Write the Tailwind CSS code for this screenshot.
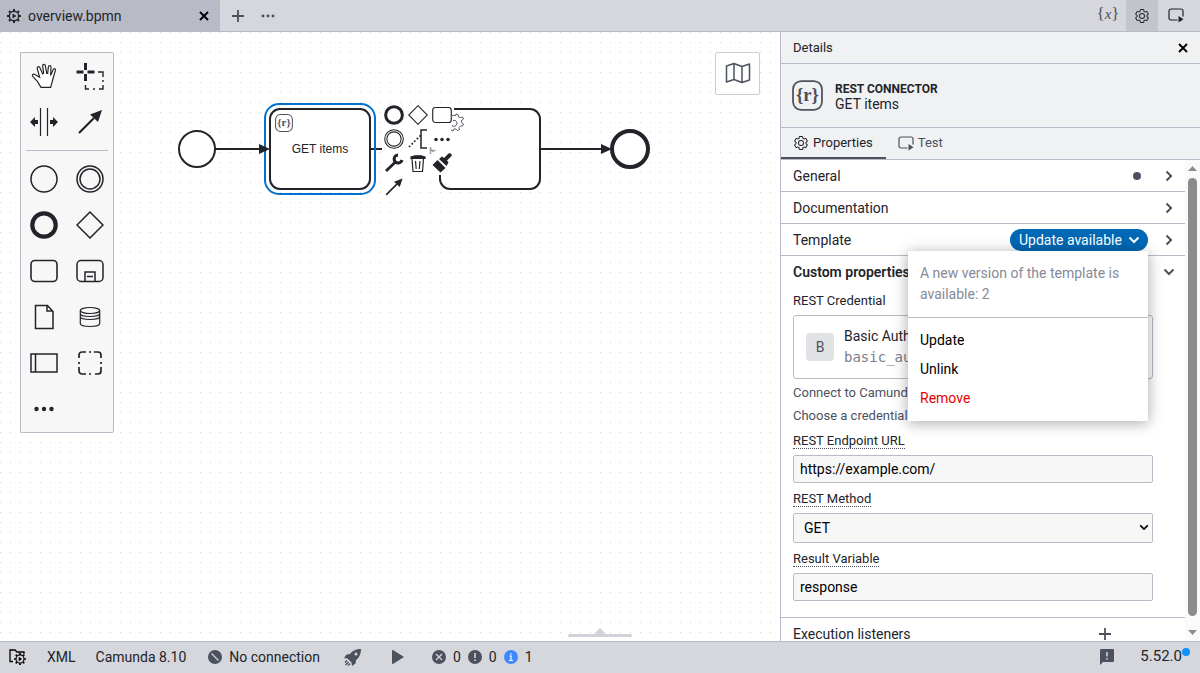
<!DOCTYPE html>
<html lang="en">
<head>
<meta charset="utf-8">
<title>overview.bpmn</title>
<script src="https://cdn.jsdelivr.net/npm/@tailwindcss/browser@4"></script>
</head>
<body class="flex h-screen flex-col overflow-hidden bg-white font-[Roboto,'Open_Sans',sans-serif] text-sm text-[#22242a]">

<svg class="hidden" aria-hidden="true">
  <symbol id="gear" viewBox="0 0 32 32"><path fill="currentColor" fill-rule="evenodd" d="M27,16.76c0-.25,0-.5,0-.76s0-.51,0-.77l1.92-1.68A2,2,0,0,0,29.3,11L26.94,7a2,2,0,0,0-1.73-1,2,2,0,0,0-.64.1l-2.43.82a11.35,11.35,0,0,0-1.31-.75l-.51-2.52a2,2,0,0,0-2-1.61H13.64a2,2,0,0,0-2,1.61l-.51,2.52a11.48,11.48,0,0,0-1.32.75L7.43,6.06A2,2,0,0,0,6.79,6,2,2,0,0,0,5.06,7L2.7,11a2,2,0,0,0,.41,2.51L5,15.24c0,.25,0,.5,0,.76s0,.51,0,.77L3.11,18.45A2,2,0,0,0,2.7,21L5.06,25a2,2,0,0,0,1.73,1,2,2,0,0,0,.64-.1l2.43-.82a11.35,11.35,0,0,0,1.31.75l.51,2.52a2,2,0,0,0,2,1.61h4.72a2,2,0,0,0,2-1.61l.51-2.52a11.48,11.48,0,0,0,1.32-.75l2.42.82a2,2,0,0,0,.64.1,2,2,0,0,0,1.73-1L29.3,21a2,2,0,0,0-.41-2.51ZM25.21,24l-3.43-1.16a8.86,8.86,0,0,1-2.71,1.57L18.36,28H13.64l-.71-3.55a9.36,9.36,0,0,1-2.7-1.57L6.79,24,4.43,20l2.72-2.4a8.9,8.9,0,0,1,0-3.13L4.43,12,6.79,8l3.43,1.16a8.86,8.86,0,0,1,2.71-1.57L13.64,4h4.72l.71,3.55a9.36,9.36,0,0,1,2.7,1.57L25.21,8,27.57,12l-2.72,2.4a8.9,8.9,0,0,1,0,3.13L27.57,20Z M16,22a6,6,0,1,1,6-6A5.94,5.94,0,0,1,16,22Zm0-10a3.91,3.91,0,0,0-4,4,3.91,3.91,0,0,0,4,4,3.91,3.91,0,0,0,4-4A3.91,3.91,0,0,0,16,12Z"/></symbol>
  <symbol id="engine" viewBox="0 0 14 14">
    <circle cx="7" cy="7" r="4.700" fill="none" stroke="currentColor" stroke-width="1.400"/>
    <path stroke="currentColor" stroke-width="2" d="M7 0v2M7 12v2M0 7h2M12 7h2M2 2l1.500 1.500M10.500 10.500 12 12M12 2l-1.500 1.500M3.500 10.500 2 12"/>
    <path fill="currentColor" d="M5.500 4.500v5L9.500 7z"/>
  </symbol>
  <symbol id="play-box" viewBox="0 0 16 15">
    <path fill="none" stroke="currentColor" stroke-width="1.200" d="M9.500 12H3a2 2 0 0 1-2-2V3a2 2 0 0 1 2-2h10a2 2 0 0 1 2 2v5.500"/>
    <path fill="currentColor" d="M10.500 8v6.500L15.500 11.200z"/>
  </symbol>
  <symbol id="cross" viewBox="0 0 10 10"><path stroke="currentColor" stroke-width="1.900" d="M1 1l8 8M9 1L1 9"/></symbol>
  <symbol id="plus" viewBox="0 0 12 12"><path stroke="currentColor" stroke-width="1.800" d="M6 0v12M0 6h12"/></symbol>
  <symbol id="dots" viewBox="0 0 20 6"><g fill="currentColor"><circle cx="2.500" cy="3" r="2.200"/><circle cx="10" cy="3" r="2.200"/><circle cx="17.500" cy="3" r="2.200"/></g></symbol>
  <symbol id="chevron" viewBox="0 0 8 12"><path fill="none" stroke="currentColor" stroke-width="2" d="M1.500 1.500L6 6l-4.500 4.500"/></symbol>
  <symbol id="chevron-down" viewBox="0 0 12 8"><path fill="none" stroke="currentColor" stroke-width="2" d="M1.500 1.500L6 6l4.500-4.500"/></symbol>
  <symbol id="connector" viewBox="0 0 30 30">
    <rect x="1" y="1" width="28" height="28" rx="8" fill="none" stroke="currentColor" stroke-width="1.700"/>
    <text x="15" y="20" text-anchor="middle" font-family="Liberation Serif, serif" font-weight="bold" font-size="18" fill="currentColor">{r}</text>
  </symbol>
  <symbol id="ring" viewBox="0 0 28 28"><circle cx="14" cy="14" r="13" fill="none" stroke="currentColor" stroke-width="1.500"/></symbol>
  <symbol id="ring-double" viewBox="0 0 28 28"><g fill="none" stroke="currentColor" stroke-width="1.500"><circle cx="14" cy="14" r="13"/><circle cx="14" cy="14" r="10"/></g></symbol>
  <symbol id="ring-thick" viewBox="0 0 28 28"><circle cx="14" cy="14" r="11.700" fill="none" stroke="currentColor" stroke-width="4.200"/></symbol>
  <symbol id="diamond" viewBox="0 0 28 28"><path fill="none" stroke="currentColor" stroke-width="1.500" d="M14 1l13 13-13 13L1 14z"/></symbol>
  <symbol id="task" viewBox="0 0 28 28"><rect x="1" y="3.500" width="26" height="21" rx="4" fill="none" stroke="currentColor" stroke-width="1.600"/></symbol>
  <symbol id="arrow" viewBox="0 0 28 28"><path stroke="currentColor" stroke-width="2.200" d="M3 25L18 10"/><path fill="currentColor" d="M26 2l-4 12-8-7.500z"/></symbol>
</svg>

<header class="flex h-8 shrink-0 border-b border-[#b8bac8] bg-[#d5d7dd]">
  <div class="flex w-[220px] items-center bg-[#b8bac6] pt-px pr-[11px] pl-[7px]">
    <svg class="mr-[7px] size-[14px]"><use href="#engine"/></svg>
    <span class="flex-1">overview.bpmn</span>
    <button aria-label="Close tab" class="text-black"><svg class="size-[10px]"><use href="#cross"/></svg></button>
  </div>
  <button aria-label="New tab" class="ml-3 text-[#4c515e]"><svg class="size-3"><use href="#plus"/></svg></button>
  <button aria-label="Tabs menu" class="ml-[17px] text-[#4c515e]"><svg class="h-[4px] w-[14px]"><use href="#dots"/></svg></button>
  <div class="ml-auto flex pr-[6px]">
    <button aria-label="Variables" class="w-9 pb-[3px] text-center font-['Liberation_Serif',serif] text-[17px] leading-7 text-[#4c515e]">{<i class="text-[15px]">x</i>}</button>
    <button aria-label="Properties panel" class="grid w-8 place-items-center bg-[#c4c5ca]"><svg class="size-4"><use href="#gear"/></svg></button>
    <button aria-label="Play" class="grid w-9 place-items-center"><svg class="h-[15px] w-4"><use href="#play-box"/></svg></button>
  </div>
</header>

<main class="flex min-h-0 flex-1">
  <section aria-label="Diagram" class="relative min-w-0 flex-1">
    <svg class="block h-full w-full">
      <defs><pattern id="grid" width="10" height="10" patternUnits="userSpaceOnUse"><rect width="1" height="1" fill="#d3d3d6"/></pattern></defs>
      <rect width="100%" height="100%" fill="url(#grid)"/>
      <g fill="#fff" stroke="#22242a" stroke-width="2">
        <path d="M215 117h47M370 117h70M540 117h68"/>
        <path fill="#22242a" stroke="none" d="M601 112v10l11-5z"/>
        <circle cx="197" cy="117" r="18"/>
        <circle cx="630" cy="117" r="18" stroke-width="4"/>
        <rect x="270" y="77" width="100" height="80" rx="10"/>
        <rect x="440" y="77" width="100" height="80" rx="10"/>
      </g>
      <rect x="265" y="72" width="110" height="90" rx="14" fill="none" stroke="#0072ce" stroke-width="2"/>
      <path fill="#22242a" d="M259 112v10l11-5z"/>
      <use href="#connector" x="275" y="82" width="18" height="18" color="#4c515e"/>
      <text x="320" y="121" text-anchor="middle" class="fill-[#22242a] font-['Liberation_Sans',sans-serif] text-xs">GET items</text>
    </svg>

    <nav aria-label="Palette" class="absolute top-5 left-5 grid w-[94px] grid-cols-2 rounded-[2px] border border-[#b8bac8] bg-[#f7f7f8]">
      <button aria-label="Hand tool" class="grid h-[46px] place-items-center"><svg class="size-7" viewBox="90 186 84 84" fill="#fff" stroke="currentColor" stroke-width="3.500"><path d="M123 262L152 262L158 240L166 212C168 205 161 204 159 210L154 222L152 224L153 202C153 195 146 195 145 202L143 220L140 220L136 197C135 191 127 192 128 199L131 220L128 222L120 204C117 197 110 200 112 207L119 232L106 224C100 220 94 225 99 230L112 244Z"/></svg></button>
      <button aria-label="Lasso tool" class="grid h-[46px] place-items-center"><svg class="size-7" viewBox="0 0 28 28" stroke="currentColor" fill="none"><path stroke-width="3" d="M0.500 10h7M11.500 10h7M9.500 1v7M9.500 12v7"/><path stroke-width="1.400" d="M22 10h5v5M27 18v2M27 23v4h-4M19 27h-2M13 27H9.500v-4"/></svg></button>
      <button aria-label="Space tool" class="grid h-[46px] place-items-center"><svg class="size-7" viewBox="0 0 28 28"><path stroke="currentColor" stroke-width="1.200" d="M10.500 0v28M17.500 0v28"/><path fill="currentColor" d="M0 14l5-5v3h3v4H5v3zM28 14l-5-5v3h-3v4h3v3z"/></svg></button>
      <button aria-label="Connect tool" class="grid h-[46px] place-items-center"><svg class="size-7"><use href="#arrow"/></svg></button>
      <hr class="col-span-2 mx-[5px] my-[5px] border-[#b8bac8]">
      <button aria-label="Start event" class="grid h-[46px] place-items-center"><svg class="size-7"><use href="#ring"/></svg></button>
      <button aria-label="Intermediate event" class="grid h-[46px] place-items-center"><svg class="size-7"><use href="#ring-double"/></svg></button>
      <button aria-label="End event" class="grid h-[46px] place-items-center"><svg class="size-7"><use href="#ring-thick"/></svg></button>
      <button aria-label="Gateway" class="grid h-[46px] place-items-center"><svg class="size-7"><use href="#diamond"/></svg></button>
      <button aria-label="Task" class="grid h-[46px] place-items-center"><svg class="size-7"><use href="#task"/></svg></button>
      <button aria-label="Sub-process" class="grid h-[46px] place-items-center"><svg class="size-7" viewBox="0 0 28 28" fill="none" stroke="currentColor" stroke-width="1.500"><rect x="1" y="3.500" width="26" height="21" rx="4"/><path d="M9 24.500v-9.500h10v9.500M11 19.500h6"/></svg></button>
      <button aria-label="Data object" class="grid h-[46px] place-items-center"><svg class="size-7" viewBox="0 0 28 28" fill="none" stroke="currentColor" stroke-width="1.500"><path d="M5.500 2.500h12l5.500 6v17H5.500zM17 2.500V8h6"/></svg></button>
      <button aria-label="Data store" class="grid h-[46px] place-items-center"><svg class="size-7" viewBox="0 0 28 28" fill="none" stroke="currentColor" stroke-width="1.200"><ellipse cx="14" cy="7.500" rx="9.700" ry="3"/><path d="M4.300 7.500v13c0 4 19.400 4 19.400 0v-13M4.300 10.500c0 4 19.400 4 19.400 0M4.300 13.500c0 4 19.400 4 19.400 0"/></svg></button>
      <button aria-label="Participant" class="grid h-[46px] place-items-center"><svg class="size-7" viewBox="0 0 28 28" fill="none" stroke="currentColor" stroke-width="1.500"><path d="M1 5h26v18H1zM5.500 5v18"/></svg></button>
      <button aria-label="Group" class="grid h-[46px] place-items-center"><svg class="size-7" viewBox="0 0 28 28" fill="none" stroke="currentColor" stroke-width="1.700"><path d="M3 9V6a3 3 0 0 1 3-3h4M18 3h4a3 3 0 0 1 3 3v3M25 18v4a3 3 0 0 1-3 3h-3M10 25H6a3 3 0 0 1-3-3v-4M13 3h2M13 25h2M3 13v2M25 13v2"/></svg></button>
      <button aria-label="More elements" class="grid h-[46px] place-items-center"><svg class="h-[6px] w-5"><use href="#dots"/></svg></button>
    </nav>

    <!-- Context pad beside the selected task -->
    <div class="absolute top-[71px] left-[382px]">
      <div class="grid grid-cols-3 bg-white">
        <button aria-label="Append end event" class="grid size-6 place-items-center"><svg class="size-5"><use href="#ring-thick"/></svg></button>
        <button aria-label="Append gateway" class="grid size-6 place-items-center"><svg class="size-5"><use href="#diamond"/></svg></button>
        <button aria-label="Append task" class="grid size-6 place-items-center"><svg class="size-5"><use href="#task"/></svg></button>
        <button aria-label="Append intermediate event" class="grid size-6 place-items-center"><svg class="size-5"><use href="#ring-double"/></svg></button>
        <button aria-label="Add text annotation" class="grid size-6 place-items-center"><svg class="size-5" viewBox="0 0 20 20" fill="none" stroke="currentColor"><path stroke-width="1.500" d="M19 1h-6v18h6"/><path stroke-width="1.700" stroke-dasharray="1.700 2" d="M1 18L13 6"/></svg></button>
        <button aria-label="Append element" class="grid size-6 place-items-center"><svg class="h-[5px] w-4"><use href="#dots"/></svg></button>
        <button aria-label="Change element" class="grid size-6 place-items-center"><svg class="size-5" viewBox="0 0 20 20"><path stroke="currentColor" stroke-width="2.800" d="M2 18L12 8.500"/><path fill="none" stroke="currentColor" stroke-width="3" d="M14 2a4 4 0 1 0 4 5"/></svg></button>
        <button aria-label="Delete" class="grid size-6 place-items-center"><svg class="size-5" viewBox="0 0 20 20" fill="none" stroke="currentColor" stroke-width="1.200"><path d="M4 6l1 12.500h9.500L15.500 6M7.500 8l.7 8M12 8l-.7 8"/><path fill="currentColor" d="M3 5.500V4l4-1.200h6L17 4v1.500z"/></svg></button>
        <button aria-label="Set colour" class="grid size-6 place-items-center"><svg class="size-5" viewBox="0 0 20 20" fill="currentColor"><path d="M5.500 7l8 8-5 4.500-8-7.500zM7 6l3-2.500L12 5l4.500-4.500c2-1 4 1 3 2.500L15 7.500l1.500 2-2 3.500z"/></svg></button>
      </div>
      <button aria-label="Connect" class="grid size-6 place-items-center bg-white"><svg class="size-5"><use href="#arrow"/></svg></button>
      <svg class="absolute top-[10px] left-[63px] size-5" viewBox="0 0 20 20" fill="none" stroke="#555862"><path d="M6 4l2-2 2 1 1-2 2 .5.500 2.500 2 .5 2-.500 1 2-2 1.500v2l2 1.500-1 2h-2l-1.500 1.500.5 2-2 1-1.500-1.500h-2L8 18l-2-1"/><path d="M8 7.500a3 3 0 1 1-1 5"/></svg>
      <svg class="absolute top-[42px] left-[43px] size-[11px]" viewBox="0 0 11 11" stroke="#a0a2a9" fill="none"><path stroke-width="1.500" d="M5.500 2v7M5.500 5.500h5M5.500 4l3 3"/></svg>
    </div>

    <button aria-label="Toggle minimap" class="absolute top-5 right-5 grid h-[43px] w-[45px] place-items-center rounded-[2px] border border-[#ccc] bg-white pb-[2px] text-[#4c515e]"><svg class="h-[22px] w-[26px]" viewBox="0 0 26 22" fill="none" stroke="currentColor" stroke-width="1.500" stroke-linejoin="round"><path d="M1.500 4L9 1.500l8 3L24.500 2v16L17 20.500l-8-3-7.500 2.500zM9 1.500v16M17 4.500v16"/></svg></button>
    <button aria-label="Resize bottom panel" class="absolute bottom-1 left-[568px] flex w-16 flex-col items-center"><svg class="h-[6px] w-3" viewBox="0 0 12 6"><path fill="#d2d3da" d="M0 6l6-6 6 6z"/></svg><span class="h-[3px] w-full rounded-full bg-[#d2d3da]"></span></button>
  </section>

  <aside aria-label="Details" class="flex w-[420px] flex-col border-l border-[#b8bac8]">
    <div class="flex h-8 shrink-0 items-center justify-between border-b border-[#b8bac8] bg-[#f0f1f3] px-3">
      <h2 class="pt-px text-[13px]">Details</h2>
      <button aria-label="Close panel" class="text-black"><svg class="size-[10px]"><use href="#cross"/></svg></button>
    </div>
    <div class="flex h-16 shrink-0 items-center gap-3 border-b border-[#b8bac8] bg-[#f0f1f3] px-[11px]">
      <svg class="size-[31px] text-[#4c515e]"><use href="#connector"/></svg>
      <div class="leading-[14px]"><div class="text-xs font-bold">REST CONNECTOR</div><div>GET items</div></div>
    </div>
    <div role="tablist" class="flex h-8 shrink-0 border-b border-[#b8bac8] bg-[#f0f1f3] text-[13px]">
      <button role="tab" aria-selected="true" class="flex items-center gap-1 border-b-2 border-[#4c515e] pt-px pr-[13px] pl-3"><svg class="size-4"><use href="#gear"/></svg>Properties</button>
      <button role="tab" aria-selected="false" class="flex items-center gap-1 px-3 text-[#4c515e]"><svg class="h-[15px] w-4"><use href="#play-box"/></svg>Test</button>
    </div>

    <div class="flex min-h-0 flex-1">
      <div class="min-w-0 flex-1 overflow-hidden">
        <div class="flex h-8 items-center border-b border-[#b8bac8] px-3"><h3 class="flex-1">General</h3><span class="mr-6 size-2 rounded-full bg-[#4c515e]"></span><button aria-label="Open General" class="text-[#4c515e]"><svg class="h-3 w-2"><use href="#chevron"/></svg></button></div>
        <div class="flex h-8 items-center border-b border-[#b8bac8] px-3"><h3 class="flex-1">Documentation</h3><button aria-label="Open Documentation" class="text-[#4c515e]"><svg class="h-3 w-2"><use href="#chevron"/></svg></button></div>
        <div class="flex h-8 items-center border-b border-[#b8bac8] px-3">
          <h3 class="flex-1">Template</h3>
          <div class="relative mr-[17px]">
            <button aria-expanded="true" class="flex h-[22px] w-[138px] items-center justify-between rounded-full bg-[#0068b5] pr-2 pl-[9px] text-white">Update available<svg class="h-2 w-3"><use href="#chevron-down"/></svg></button>
            <div class="absolute top-full right-0 z-10 w-60 bg-white shadow-[0_2px_14px_rgba(0,0,0,0.35)]">
              <p class="border-b border-[#b8bac8] px-3 py-3 leading-[21px] text-[#868998]">A new version of the template is available: 2</p>
              <div class="flex flex-col py-2 text-black">
                <button class="h-[29px] px-3 text-left">Update</button>
                <button class="h-[29px] px-3 text-left">Unlink</button>
                <button class="h-[29px] px-3 text-left text-[#e60000]">Remove</button>
              </div>
            </div>
          </div>
          <button aria-label="Open Template" class="text-[#4c515e]"><svg class="h-3 w-2"><use href="#chevron"/></svg></button>
        </div>
        <div class="border-b border-[#b8bac8] pb-4">
          <div class="flex h-8 items-center pr-[10px] pl-3"><h3 class="flex-1 font-semibold">Custom properties</h3><button aria-label="Close Custom properties" class="text-[#4c515e]"><svg class="h-2 w-3"><use href="#chevron-down"/></svg></button></div>
          <div class="pr-8 pl-3 text-[13px] leading-5">
            <div class="mt-[3px] mb-1">REST Credential</div>
            <div class="flex h-16 items-center gap-[10px] rounded-[3px] border border-[#b8bac8] px-3 text-sm">
              <span class="grid size-7 place-items-center rounded bg-[#e1e2e6] text-[#4c515e]">B</span>
              <div class="leading-[21px]"><div>Basic Auth</div><div class="font-['DejaVu_Sans_Mono',monospace] text-[#7b7e8c]">basic_auth</div></div>
            </div>
            <p class="mt-[2px] leading-[23px] text-[#4c515e]">Connect to Camunda<br>Choose a credential</p>
            <label for="url" class="mt-[7px] mb-[6px] flex"><span class="border-b border-dotted border-[#4c515e] leading-[14px]">REST Endpoint URL</span></label>
            <input id="url" value="https://example.com/" class="block h-7 w-full rounded-[2px] border border-[#b8bac8] bg-[#f7f7f8] px-[6px] text-sm text-black">
            <label for="method" class="mt-[9px] mb-[6px] flex"><span class="border-b border-dotted border-[#4c515e] leading-[14px]">REST Method</span></label>
            <div class="relative">
              <select id="method" class="block h-[30px] w-full appearance-none rounded-[2px] border border-[#b8bac8] bg-[#f7f7f8] px-[10px] text-sm text-black"><option>GET</option></select>
              <svg class="pointer-events-none absolute top-[11px] right-1 h-[7px] w-[10px] text-black"><use href="#chevron-down"/></svg>
            </div>
            <label for="result" class="mt-[9px] mb-[6px] flex"><span class="border-b border-dotted border-[#4c515e] leading-[14px]">Result Variable</span></label>
            <input id="result" value="response" class="block h-7 w-full rounded-[2px] border border-[#b8bac8] bg-[#f7f7f8] px-[6px] text-sm text-black">
          </div>
        </div>
        <div class="flex h-8 items-center justify-between pr-[74px] pl-3"><h3 class="border-b border-dotted border-[#8a8d9c] leading-[14px]">Execution listeners</h3><button aria-label="Add execution listener" class="text-[#4c515e]"><svg class="size-3"><use href="#plus"/></svg></button></div>
      </div>
      <div aria-hidden="true" class="flex w-[15px] flex-col items-center bg-[#fafafa] py-[6px]">
        <svg class="h-[5px] w-[9px]" viewBox="0 0 9 5"><path fill="#8b8b8b" d="M0 5l4.500-5L9 5z"/></svg>
        <span class="mt-[7px] mb-[14px] w-[9px] flex-1 rounded-full bg-[#8b8b8b]"></span>
        <svg class="h-[5px] w-[9px]" viewBox="0 0 9 5"><path fill="#8b8b8b" d="M0 0l4.500 5L9 0z"/></svg>
      </div>
    </div>
  </aside>
</main>

<footer class="flex h-8 shrink-0 items-center border-t border-[#b8bac8] bg-[#d5d7dd] pr-[10px] pb-px pl-[9px]">
  <button aria-label="Deployment folder" class="text-black"><svg class="h-4 w-[17px]" viewBox="0 0 17 16"><path fill="none" stroke="currentColor" stroke-width="1.300" d="M4 12.500H1V1h5l2 2h7v2"/><use href="#engine" x="5" y="4" width="12" height="12"/></svg></button>
  <button class="ml-[21px]">XML</button>
  <button class="ml-5">Camunda 8.10</button>
  <button class="ml-[22px] flex items-center gap-[7px]"><svg class="size-[14px]" viewBox="0 0 14 14"><circle cx="7" cy="7" r="7" fill="#4c515e"/><path stroke="#d5d7dd" stroke-width="1.200" d="M3.500 3.500l7 7"/></svg>No connection</button>
  <button aria-label="Deploy" class="ml-6 text-[#4c515e]"><svg class="size-[17px]" viewBox="0 0 17 17" fill="currentColor"><path fill-rule="evenodd" d="M17 0C12 0 8 2 6 5L2.500 5.500 0 9l3.500.5 4 4L8 17l3.500-2.500.5-3.500c3-2 5-6 5-11zM12 3.500a1.500 1.500 0 1 1 0 3 1.500 1.500 0 0 1 0-3z"/><path d="M2.500 11l1 1-2 2-1-1zM4 12.500l1 1L2 16.500l-1-1zM5.500 14l1 1-2 2-1-1z"/></svg></button>
  <button aria-label="Start instance" class="ml-[31px] text-[#4c515e]"><svg class="h-[14px] w-3" viewBox="0 0 12 14"><path fill="currentColor" d="M1 0l11 7L1 14q-1 0-1-1V1q0-1 1-1z"/></svg></button>
  <button aria-label="Problems" class="ml-7 flex items-center gap-[7px]">
    <svg class="size-[14px]" viewBox="0 0 14 14"><circle cx="7" cy="7" r="7" fill="#4c515e"/><path stroke="#d5d7dd" stroke-width="1.300" d="M4 4l6 6M10 4l-6 6"/></svg><span>0</span>
    <svg class="size-[14px]" viewBox="0 0 14 14"><circle cx="7" cy="7" r="7" fill="#4c515e"/><path stroke="#d5d7dd" stroke-width="1.600" d="M7 3v5M7 9.500v1.600"/></svg><span>0</span>
    <svg class="size-[14px]" viewBox="0 0 14 14"><circle cx="7" cy="7" r="7" fill="#4088ff"/><path stroke="#fff" stroke-width="1.200" fill="none" d="M5.500 6H7v4.500M5 10.500h4M7 3.200v1.500"/></svg><span>1</span>
  </button>
  <button aria-label="Feedback" class="ml-auto text-[#4c515e]"><svg class="h-4 w-[14px]" viewBox="0 0 14 16"><path fill="currentColor" d="M1 0h12q1 0 1 1v11q0 1-1 1H3l-3 3V1q0-1 1-1z"/><path stroke="#d5d7dd" stroke-width="1.500" d="M7 3v4.500M7 9v1.500"/></svg></button>
  <button class="ml-[26px] flex text-[15px]">5.52.0<span class="mt-[2px] size-2 rounded-full bg-[#1090ff]"></span></button>
</footer>
</body>
</html>
